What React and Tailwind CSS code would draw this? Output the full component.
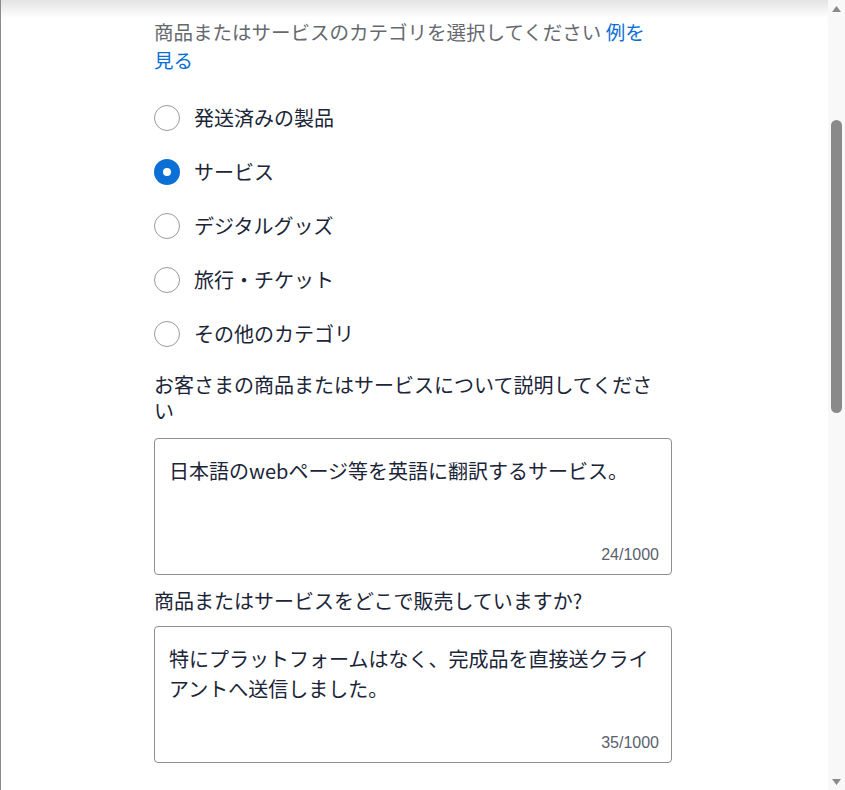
import React, { useState } from "react";

const options = [
  "発送済みの製品",
  "サービス",
  "デジタルグッズ",
  "旅行・チケット",
  "その他のカテゴリ",
];

const font = {
  fontFamily: '"Noto Sans CJK JP", "Noto Sans", sans-serif',
};

const TextBox = ({ text, max }) => {
  return (
    <div className="flex flex-col h-[137px] w-[518px] border border-[#8e8e8e] rounded-[4px] pl-[14px] pr-[12px] pt-[17px] pb-[10px]">
      <p className="text-[20px] leading-[30px] text-[#1b2538]">{text}</p>
      <div className="mt-auto text-right text-[16px] leading-[18px] text-[#5a616d]" style={{ fontFamily: '"Liberation Sans", sans-serif' }}>
        {text.length}/{max}
      </div>
    </div>
  );
};

const App = () => {
  const [selected, setSelected] = useState(1);

  return (
    <div className="flex h-[790px] w-[845px] bg-white overflow-hidden border-l border-[#8c8c8c]" style={font}>
      <div className="flex-1 flex flex-col">
        <div className="h-[18px] bg-gradient-to-b from-[#e4e4e4] to-white" />
        <div className="pl-[153px] w-[672px]">
          <p className="w-[505px] text-[19.5px] leading-[28px] text-[#666a70]">
            商品またはサービスのカテゴリを選択してください <span className="text-[#0b6fd6]">例を見る</span>
          </p>

          {/* category radios */}
          <div className="mt-[17px] flex flex-col">
            {options.map((label, i) => (
              <label
                key={label}
                className="flex items-center h-[54px] cursor-pointer"
                onClick={() => setSelected(i)}
              >
                {selected === i ? (
                  <span className="w-[26px] h-[26px] rounded-full bg-[#0b6fd6] flex items-center justify-center">
                    <span className="w-[8px] h-[8px] rounded-full bg-white" />
                  </span>
                ) : (
                  <span className="w-[26px] h-[26px] rounded-full border border-[#9a9a9a] bg-white" />
                )}
                <span className="ml-[14px] text-[20px] text-[#1b2538]">{label}</span>
              </label>
            ))}
          </div>

          <p className="mt-[11px] w-[508px] text-[20px] leading-[26px] text-[#1b2538]">
            お客さまの商品またはサービスについて説明してください
          </p>
          <div className="mt-[14px]">
            <TextBox text="日本語のwebページ等を英語に翻訳するサービス。" max={1000} />
          </div>

          <p className="mt-[13px] text-[20px] leading-[26px] text-[#1b2538]">
            商品またはサービスをどこで販売していますか?
          </p>
          <div className="mt-[12px]">
            <TextBox text="特にプラットフォームはなく、完成品を直接送クライアントへ送信しました。" max={1000} />
          </div>
        </div>
      </div>

      {/* scrollbar */}
      <div className="w-[17px] bg-[#f8f8f8] flex flex-col items-center">
        <div className="h-[17px] flex items-center justify-center">
          <svg width="9" height="6" viewBox="0 0 9 6">
            <path d="M0 6 L4.5 0 L9 6 Z" fill="#8a8a8a" />
          </svg>
        </div>
        <div className="mt-[103px] w-[11px] h-[293px] rounded-full bg-[#8a8a8a]" />
        <div className="mt-auto h-[17px] flex items-center justify-center">
          <svg width="9" height="6" viewBox="0 0 9 6">
            <path d="M0 0 L9 0 L4.5 6 Z" fill="#8a8a8a" />
          </svg>
        </div>
      </div>
    </div>
  );
};

export default App;
